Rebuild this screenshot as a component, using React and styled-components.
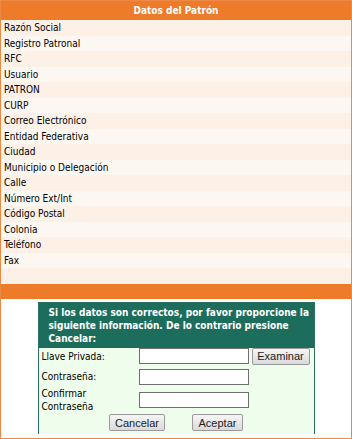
import React from "react";
import styled, { createGlobalStyle } from "styled-components";

const GlobalStyle = createGlobalStyle`
  body {
    margin: 0;
    background: #fff;
    font-family: "DejaVu Sans Condensed", "DejaVu Sans", sans-serif;
  }
`;

const Panel = styled.div`
  width: 350px;
  height: 437px;
  border: 1px solid #ec8a45;
  display: flex;
  flex-direction: column;
  font-size: 10px;
  color: #000;
`;

const Title = styled.div`
  height: 19px;
  background: #ed7b2a;
  color: #fff;
  font-weight: bold;
  font-size: 10px;
  display: flex;
  align-items: center;
  justify-content: center;
`;

const Row = styled.div`
  height: 15.5px;
  padding-left: 3px;
  display: flex;
  align-items: center;
  background: ${p => (p.odd ? "#fdf7f2" : "#fcf0e7")};
`;

const Bar = styled.div`
  height: 15px;
  background: #ed7b2a;
`;

const Footer = styled.div`
  flex: 1;
  display: flex;
  justify-content: center;
  align-items: flex-start;
  padding-top: 3px;
`;

const Box = styled.div`
  width: 275px;
  height: 130px;
  border: 1px solid #2b6f62;
  display: flex;
  flex-direction: column;
`;

const BoxHead = styled.div`
  background: #1d6d5c;
  color: #fff;
  font-weight: bold;
  font-size: 10px;
  line-height: 13px;
  height: 39px;
  padding: 3px 4px 3px 10px;
`;

const Form = styled.div`
  flex: 1;
  background: #effdec;
  display: grid;
  grid-template-columns: 97px 113px auto;
  grid-template-rows: 17px 24px 23px 22px;
  align-items: center;
  padding: 0 3px;
`;

const Label = styled.div`
  font-size: 10px;
  line-height: 13px;
`;

const Input = styled.input`
  width: 110px;
  height: 16px;
  box-sizing: border-box;
  border: 1px solid #6f6f6f;
  background: #fff;
  margin: 0;
  padding: 0;
`;

const Button = styled.button`
  font-family: "Liberation Sans", Arial, sans-serif;
  font-size: 11px;
  height: 17px;
  padding: 0;
  width: ${p => p.w}px;
  border: 1px solid #9a9a9a;
  border-radius: 2px;
  background: linear-gradient(#f6f6f6, #dadada);
  color: #222;
  margin: 0;
`;

const Cell = styled.div`
  display: flex;
  align-items: center;
`;

const Actions = styled.div`
  grid-column: 1 / -1;
  display: flex;
  justify-content: center;
  gap: 27px;
  align-items: center;
`;

const fields = [
  "Razón Social",
  "Registro Patronal",
  "RFC",
  "Usuario",
  "PATRON",
  "CURP",
  "Correo Electrónico",
  "Entidad Federativa",
  "Ciudad",
  "Municipio o Delegación",
  "Calle",
  "Número Ext/Int",
  "Código Postal",
  "Colonia",
  "Teléfono",
  "Fax",
  ""
];

function App() {
  return (
    <>
      <GlobalStyle />
      <Panel>
        <Title>Datos del Patrón</Title>
        {fields.map((f, i) => (
          <Row key={i} odd={i % 2 === 1}>
            {f}
          </Row>
        ))}
        <Bar />
        <Footer>
          <Box>
            <BoxHead>
              Si los datos son correctos, por favor proporcione la siguiente
              información. De lo contrario presione Cancelar:
            </BoxHead>
            <Form>
              <Cell>
                <Label>Llave Privada:</Label>
              </Cell>
              <Cell>
                <Input type="text" />
              </Cell>
              <Cell>
                <Button w={58}>Examinar</Button>
              </Cell>
              <Cell>
                <Label>Contraseña:</Label>
              </Cell>
              <Cell>
                <Input type="password" />
              </Cell>
              <Cell />
              <Cell>
                <Label>
                  Confirmar
                  <br />
                  Contraseña
                </Label>
              </Cell>
              <Cell>
                <Input type="password" />
              </Cell>
              <Cell />
              <Actions>
                <Button w={56}>Cancelar</Button>
                <Button w={51}>Aceptar</Button>
              </Actions>
            </Form>
          </Box>
        </Footer>
      </Panel>
    </>
  );
}

export default App;
